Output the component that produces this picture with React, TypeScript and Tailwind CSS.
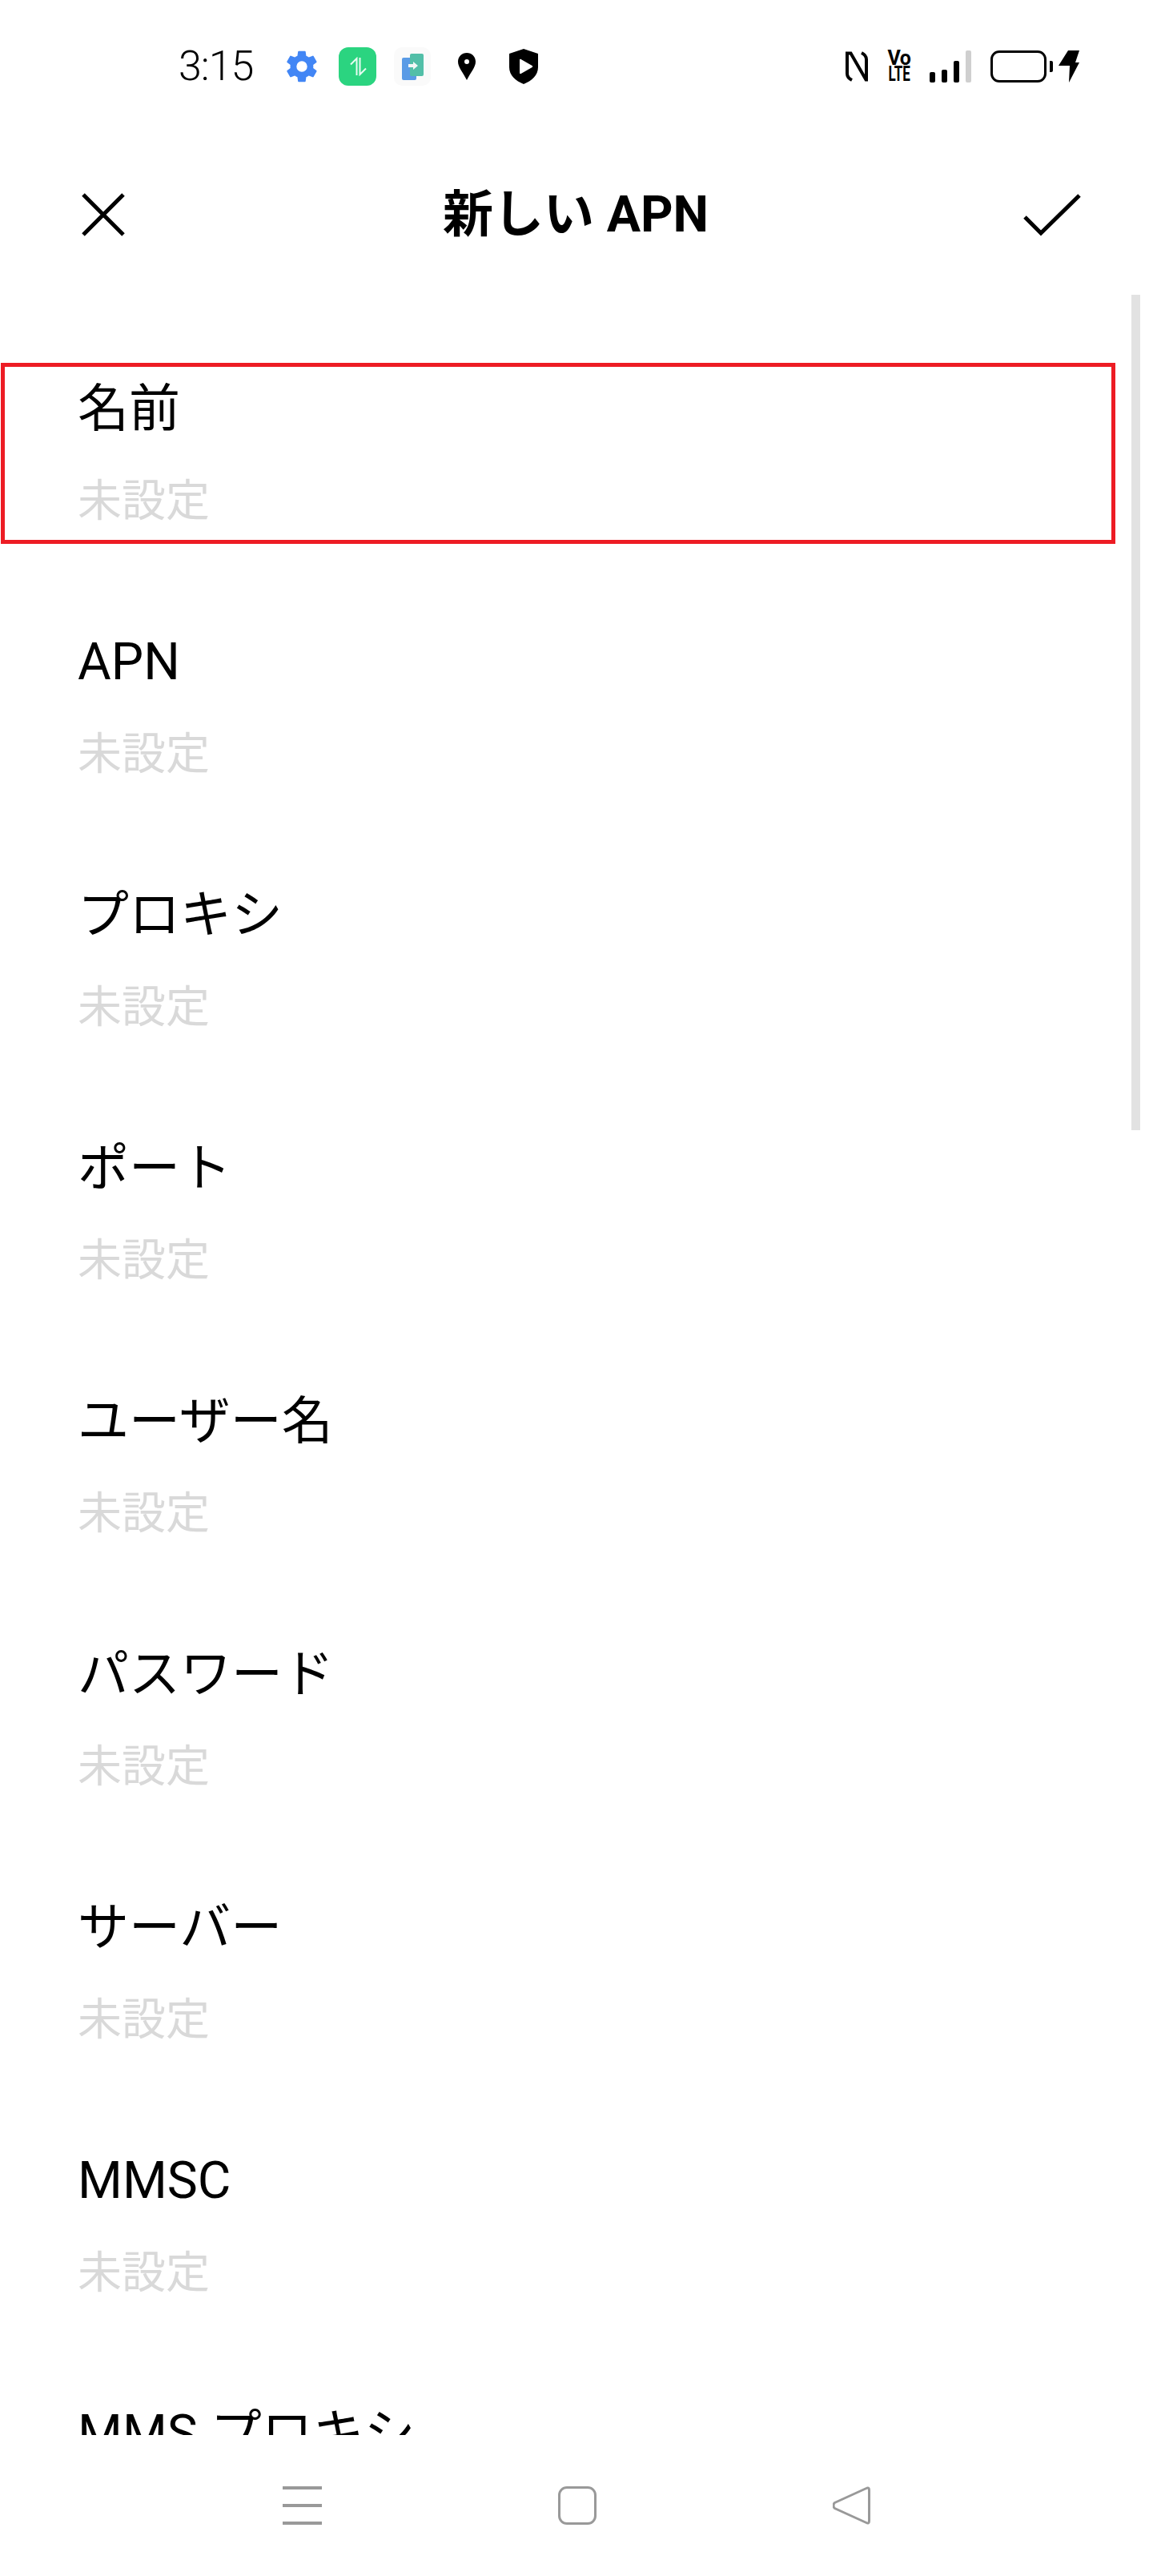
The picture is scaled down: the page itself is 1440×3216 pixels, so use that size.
import React from 'react';

const fields = ['名前', 'APN', 'プロキシ', 'ポート', 'ユーザー名', 'パスワード', 'サーバー', 'MMSC', 'MMS プロキシ'];

const fontClass = "font-['Roboto','Noto_Sans_CJK_JP',sans-serif]";

function StatusBar() {
  return (
    <div className="h-[164px] flex items-start pt-[58px] pl-[223px] pr-[92px] justify-between">
      <div className="flex items-center h-[50px]">
        <span className="w-[131px] text-[52px] leading-[50px] font-light text-black tracking-[-1px]">3:15</span>
        <svg className="w-[46px] h-[46px]" viewBox="0 0 24 24" fill="#4286f5">
          <path fillRule="evenodd" d="M19.4 13c.04-.33.06-.66.06-1s-.02-.67-.06-1l2.1-1.65a.5.5 0 0 0 .12-.64l-2-3.46a.5.5 0 0 0-.61-.22l-2.49 1a7.3 7.3 0 0 0-1.69-.98l-.38-2.65A.49.49 0 0 0 13.96 2h-4a.49.49 0 0 0-.49.42l-.38 2.65c-.61.25-1.17.59-1.69.98l-2.49-1a.5.5 0 0 0-.61.22l-2 3.46a.5.5 0 0 0 .12.64L4.52 11c-.04.33-.07.67-.07 1s.03.67.07 1l-2.1 1.65a.5.5 0 0 0-.12.64l2 3.46c.12.22.39.3.61.22l2.49-1c.52.4 1.08.73 1.69.98l.38 2.65c.03.24.24.42.49.42h4c.25 0 .46-.18.49-.42l.38-2.65c.61-.25 1.17-.59 1.69-.98l2.49 1c.23.09.49 0 .61-.22l2-3.46a.5.5 0 0 0-.12-.64zM12 15.5a3.5 3.5 0 1 1 0-7 3.5 3.5 0 0 1 0 7z" />
        </svg>
        <div className="ml-[23px] w-[47px] h-[48px] rounded-[12px] bg-[#2bd480] flex items-center justify-center">
          <svg className="w-[24px] h-[24px]" viewBox="0 0 24 24" fill="none" stroke="#e8fbf1" strokeWidth="2">
            <path d="M10.500 23V2L3 9.500" />
            <path d="M14.500 1v21l7.500-7.500" />
          </svg>
        </div>
        <div className="ml-[22px] w-[46px] h-[48px] rounded-[10px] bg-[#fafafa] relative">
          <svg className="w-[46px] h-[48px]" viewBox="0 0 46 48">
            <rect x="10" y="13" width="18" height="28" rx="2" fill="#5a9be6" />
            <rect x="20" y="8" width="17" height="28" rx="2" fill="#52bfa8" />
            <path d="M18 21h6v-3l6 5-6 5v-3h-6z" fill="#f2f7f6" />
          </svg>
        </div>
        <svg className="ml-[34px] w-[22px] h-[34px]" viewBox="0 0 22 34">
          <path fillRule="evenodd" d="M11 0C5 0 0 4.600 0 11c0 7 6.500 14 11 23 4.500-9 11-16 11-23C22 4.600 17 0 11 0zm0 14a3 3 0 1 1 0-6 3 3 0 0 1 0 6z" fill="#000" />
        </svg>
        <svg className="ml-[42px] w-[36px] h-[44px]" viewBox="0 0 36 44">
          <path fillRule="evenodd" d="M18 0l18 6v17c0 10-8 17-18 21C8 40 0 33 0 23V6zM13 12v18c0 1 .8 1.400 1.600 1l14-8c.8-.5.8-1.500 0-2l-14-8c-.8-.4-1.600 0-1.600 1z" fill="#000" />
        </svg>
      </div>
      <div className="flex items-center h-[50px]">
        <svg className="w-[28px] h-[38px]" viewBox="0 0 28 38" fill="none" stroke="#000" strokeWidth="4">
          <path d="M8 36C4 34 2 32 2 28V2.500h4.500L25.500 35.500H26V10c0-4-2-6-6-8" />
        </svg>
        <div className="ml-[24px] w-[30px] h-[40px] flex flex-col items-center text-black font-bold">
          <span className="text-[25px] leading-[20px] tracking-[-0.5px]">Vo</span>
          <span className="text-[25px] leading-[20px] scale-x-[0.68]">LTE</span>
        </div>
        <div className="ml-[23px] flex items-end gap-[8px] h-[40px]">
          <span className="w-[7px] h-[13px] rounded-[2px] bg-black" />
          <span className="w-[7px] h-[16px] rounded-[2px] bg-black" />
          <span className="w-[7px] h-[27px] rounded-[2px] bg-black" />
          <span className="w-[7px] h-[40px] rounded-[2px] bg-[#cfcfcf]" />
        </div>
        <div className="ml-[24px] w-[70px] h-[40px] rounded-[11px] border-[3.5px] border-black" />
        <span className="ml-[4px] w-[4px] h-[14px] rounded-r-[2px] bg-black" />
        <svg className="ml-[7px] w-[26px] h-[40px]" viewBox="0 0 26 40">
          <path d="M12 0h14l-5 15h5L13 40l1-21H0z" fill="#000" />
        </svg>
      </div>
    </div>
  );
}

function Header() {
  return (
    <div className="h-[208px] px-[88px] flex items-center justify-between">
      <svg className="w-[54px] h-[54px] ml-[14px]" viewBox="0 0 54 54" fill="none" stroke="#000" strokeWidth="5">
        <path d="M2 2l50 50M52 2L2 52" />
      </svg>
      <h1 className="ml-[4px] text-[63px] leading-[80px] font-bold text-black">新しい APN</h1>
      <svg className="w-[74px] h-[58px]" viewBox="0 0 74 58" fill="none" stroke="#000" strokeWidth="5">
        <path d="M2 32L22 52L70 5" />
      </svg>
    </div>
  );
}

function NavBar() {
  return (
    <div className="flex-1 flex items-start pt-[64px] justify-center gap-[295px]">
      <div className="w-[49px] h-[48px] flex flex-col justify-between">
        <span className="h-[4px] bg-[#999999]" />
        <span className="h-[4px] bg-[#999999]" />
        <span className="h-[4px] bg-[#999999]" />
      </div>
      <div className="w-[48px] h-[48px] rounded-[11px] border-[3px] border-[#999999]" />
      <svg className="w-[48px] h-[48px]" viewBox="0 0 48 48" fill="none" stroke="#999999" strokeWidth="3">
        <path d="M2.500 20.500L42 2.500c2-1 3.500-.5 3.500 2v39c0 2.500-1.500 3-3.500 2L2.500 27.500c-2-1.500-2-5.500 0-7z" />
      </svg>
    </div>
  );
}

export default function App() {
  return (
    <div className={`relative w-[1440px] h-[3216px] flex flex-col bg-white overflow-hidden ${fontClass}`}>
      <StatusBar />
      <Header />
      <div className="h-[2668px] overflow-hidden pt-[97px] px-[97px]">
        {fields.map((f, i) => (
          <div key={f} className="h-[316px]">
            <div className="text-[64px] leading-[84px] text-black whitespace-nowrap">{f}</div>
            {/* last row is cut off by the nav bar before its value shows */}
            {i < fields.length - 1 && (
              <div className="mt-[30px] text-[55px] leading-[84px] text-[#d9d9d9]">未設定</div>
            )}
          </div>
        ))}
      </div>
      <NavBar />

      {/* scrollbar + the red annotation box sit over the list */}
      <div className="absolute left-[1px] top-[453px] w-[1392px] h-[226px] border-[5px] border-[#ed1c24]" />
      <div className="absolute left-[1413px] top-[368px] w-[11px] h-[1043px] bg-[#e2e2e2]" />
    </div>
  );
}
